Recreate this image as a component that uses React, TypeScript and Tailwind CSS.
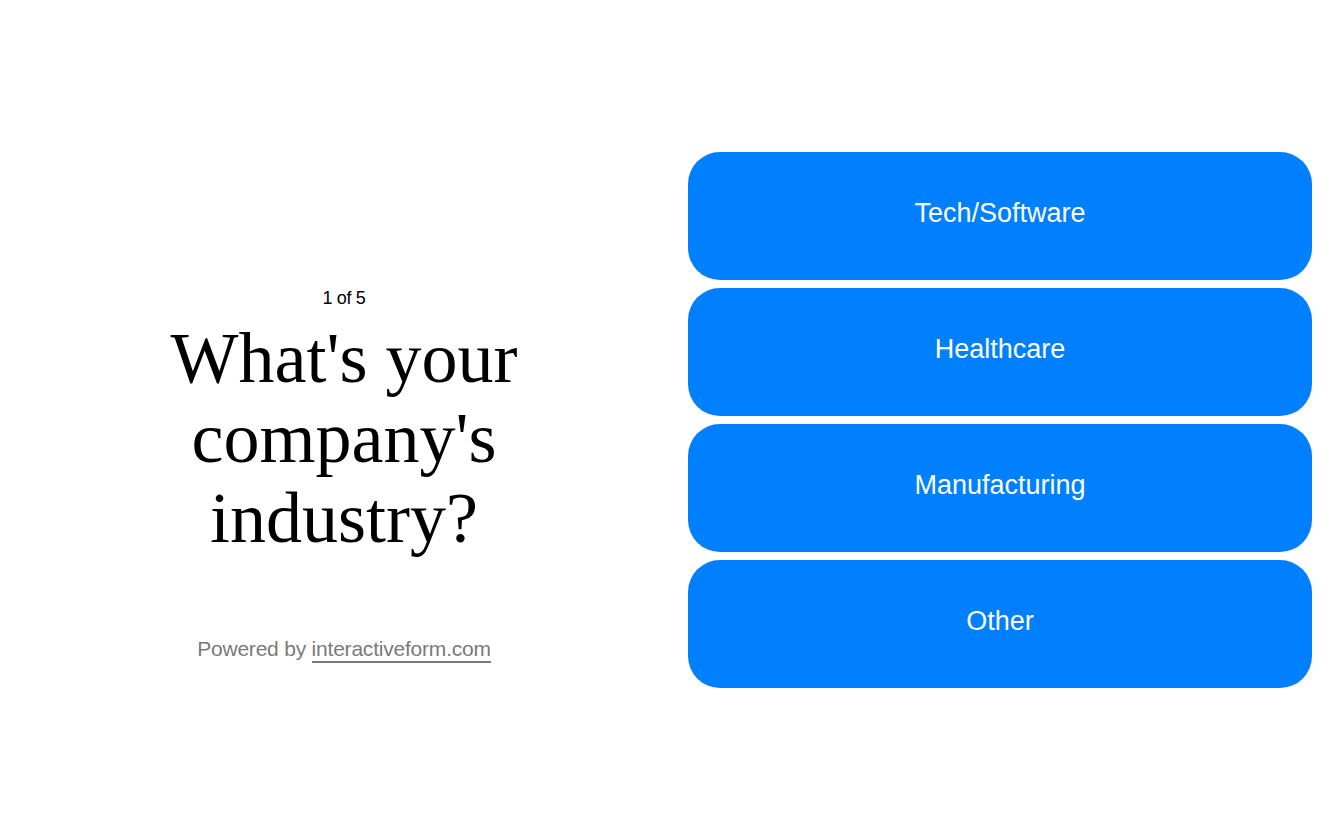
export default function App() {
  const options = ["Tech/Software", "Healthcare", "Manufacturing", "Other"];

  return (
    <div className="flex h-[840px] w-[1344px] bg-white">
      <div className="flex w-[688px] flex-col items-center pt-[285px]">
        <div className="font-['Liberation_Sans',sans-serif] text-[18px] tracking-[-0.02em] text-black">
          1 of 5
        </div>
        <h1 className="mt-[6px] text-center font-['Liberation_Serif',serif] text-[72px] leading-[80px] text-black">
          What's your
          <br />
          company's
          <br />
          industry?
        </h1>
        <div className="mt-[75px] font-['Liberation_Sans',sans-serif] text-[21px] tracking-[-0.01em] text-[#7a7a7a]">
          Powered by{" "}
          <span className="border-b-2 border-[#7a7a7a] pb-[1px]">interactiveform.com</span>
        </div>
      </div>
      <div className="flex flex-1 flex-col justify-center gap-2 pr-8">
        {options.map((o) => (
          <button
            key={o}
            className="flex h-32 items-center justify-center rounded-[32px] bg-[#007fff] pb-[6px] font-['Liberation_Sans',sans-serif] text-[27px] text-white"
          >
            {o}
          </button>
        ))}
      </div>
    </div>
  );
}
